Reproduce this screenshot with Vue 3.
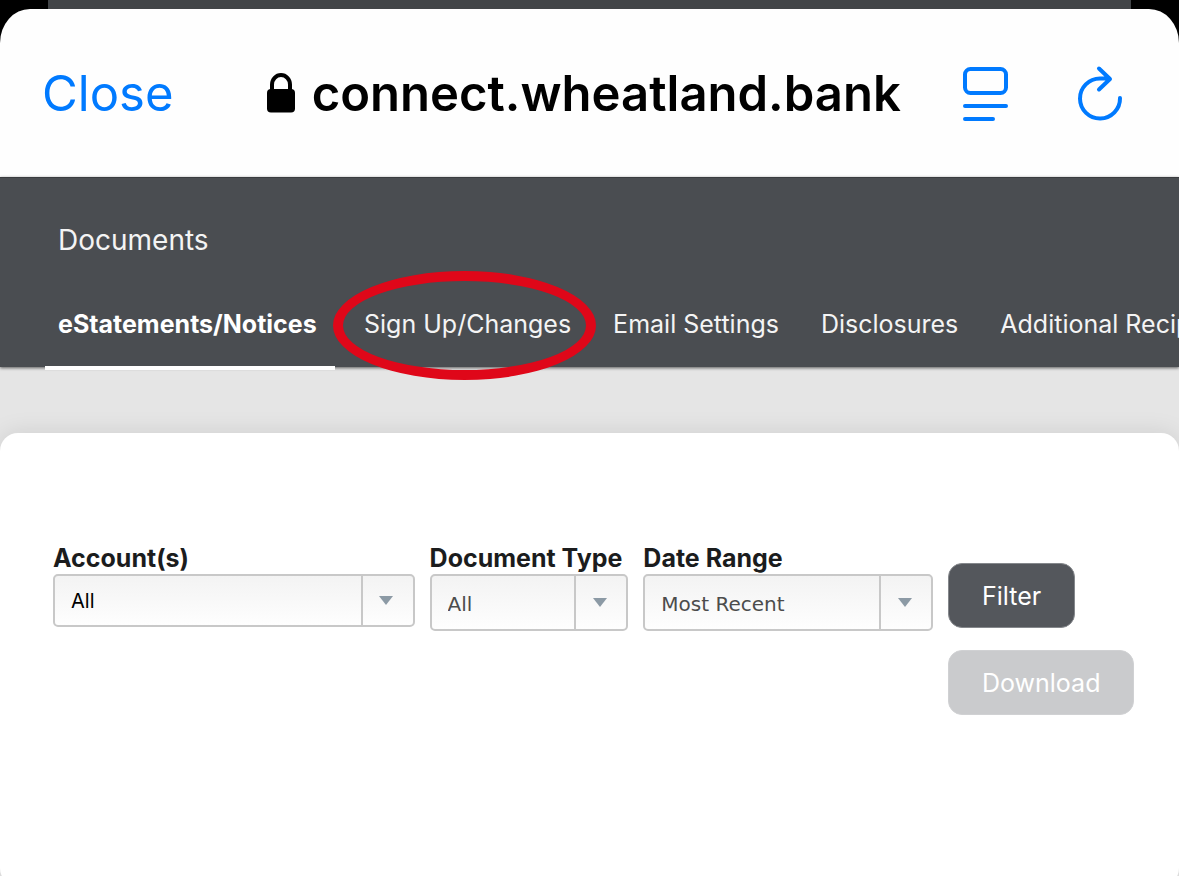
<script setup>
import { ref } from 'vue'

const tabs = [
  { label: 'eStatements/Notices', active: true },
  { label: 'Sign Up/Changes', marked: true },
  { label: 'Email Settings' },
  { label: 'Disclosures' },
  { label: 'Additional Recipients' },
]

const account = ref('All')
const docType = ref('All')
const range = ref('Most Recent')
</script>

<template>
  <div class="screen">
    <div class="backdrop"></div>
    <div class="sheet">
      <header class="browser-bar">
        <button type="button" class="close">Close</button>
        <div class="address">
          <svg class="lock" viewBox="0 0 30 40" aria-hidden="true">
            <path d="M6 19V11.500a9 9.500 0 0 1 18 0V19" fill="none" stroke="#000" stroke-width="4" />
            <rect x="1" y="16" width="28" height="23.500" rx="4" />
          </svg>
          <span>connect.wheatland.bank</span>
        </div>
        <div class="actions">
          <button type="button" aria-label="Reader view">
            <svg width="46" height="56" viewBox="0 0 46 56">
              <rect x="2" y="4" width="41" height="24" rx="5.500" />
              <path d="M2 41H43M2 54H30" />
            </svg>
          </button>
          <button type="button" aria-label="Reload">
            <svg width="46" height="56" viewBox="0 0 46 56">
              <path d="M43 33A20 20 0 1 1 23 13.500H32.500M22 3.500L33 14L22 24.500" />
            </svg>
          </button>
        </div>
      </header>

      <div class="masthead">
        <h1>Documents</h1>
        <nav>
          <a v-for="t in tabs" :key="t.label" href="#" :class="{ active: t.active }">
            {{ t.label }}
            <i v-if="t.marked" class="ring"></i>
          </a>
        </nav>
      </div>

      <main class="page">
        <form class="card" @submit.prevent>
          <div class="field account">
            <label for="account">Account(s)</label>
            <div class="select">
              <select id="account" v-model="account"><option>All</option></select>
              <span class="arrow"></span>
            </div>
          </div>
          <div class="field type">
            <label for="type">Document Type</label>
            <div class="select">
              <select id="type" v-model="docType"><option>All</option></select>
              <span class="arrow"></span>
            </div>
          </div>
          <div class="field range">
            <label for="range">Date Range</label>
            <div class="select">
              <select id="range" v-model="range"><option>Most Recent</option></select>
              <span class="arrow"></span>
            </div>
          </div>
          <div class="buttons">
            <button type="submit">Filter</button>
            <button type="button" disabled>Download</button>
          </div>
        </form>
      </main>
    </div>
  </div>
</template>

<style>
body {
  background: #000;
}
</style>

<style scoped>
.screen {
  min-height: 100vh;
  display: flex;
  flex-direction: column;
  overflow: hidden;
  background: #000;
  font-family: Inter, "Liberation Sans", sans-serif;
}
.screen * {
  box-sizing: border-box;
}
.backdrop {
  height: 9px;
  margin: 0 48px;
  background: #424548;
}
.sheet {
  flex: 1;
  display: flex;
  flex-direction: column;
  background: #fefefe;
  border-radius: 30px 30px 0 0 / 34px 34px 0 0;
}
button {
  font: inherit;
  border: 0;
  padding: 0;
  background: none;
}
.browser-bar {
  height: 168px;
  display: flex;
  align-items: center;
  padding: 0 56px 0 42px;
}
.close {
  color: #007aff;
  font-size: 49px;
}
.address {
  flex: 1;
  display: flex;
  align-items: center;
  justify-content: center;
  gap: 16px;
  padding-left: 30px;
  font-size: 49px;
  font-weight: 600;
  color: #000;
  white-space: nowrap;
}
.lock {
  width: 30px;
  height: 40px;
  flex: none;
}
.actions {
  display: flex;
  gap: 68px;
}
.actions svg {
  display: block;
  fill: none;
  stroke: #007aff;
  stroke-width: 4;
  stroke-linecap: round;
  stroke-linejoin: round;
}
.masthead {
  position: relative;
  z-index: 1;
  background: #4a4d51;
  border-top: 1px solid #3a3c3f;
  padding: 44px 0 0 45px;
  color: #fff;
  box-shadow: 0 1px 3px rgba(0, 0, 0, 0.6);
}
h1 {
  margin: 0 0 22px;
  padding-left: 13px;
  font-size: 28px;
  line-height: 36px;
  font-weight: 400;
  color: #f4f4f4;
}
nav {
  display: flex;
  gap: 16px;
  height: 87px;
  white-space: nowrap;
}
nav a {
  position: relative;
  padding: 0 13px;
  font-size: 25px;
  line-height: 88px;
  color: #f4f4f4;
  text-decoration: none;
}
nav a.active {
  min-width: 290px;
  height: 90px;
  font-weight: 700;
  color: #fff;
  border-bottom: 4px solid #fff;
}
.ring {
  position: absolute;
  inset: -9px -12px -13px -18px;
  border: 10px solid #df0719;
  border-radius: 50%;
}
.page {
  flex: 1;
  display: flex;
  flex-direction: column;
  padding-top: 66px;
  background: #e5e5e5;
}
.card {
  flex: 1;
  display: flex;
  align-items: flex-start;
  gap: 15px;
  margin-bottom: -10px;
  padding: 112px 46px 40px 53px;
  background: #fff;
  border-radius: 18px;
  box-shadow: 0 0 24px rgba(0, 0, 0, 0.1);
}
.field {
  color: #1b1c1d;
}
.account {
  flex: 362;
}
.type {
  flex: 199;
}
.range {
  flex: 290;
}
label {
  display: block;
  margin-bottom: 2px;
  font-size: 25px;
  line-height: 27px;
  font-weight: 700;
  white-space: nowrap;
}
.select {
  position: relative;
}
select {
  display: block;
  width: 100%;
  height: 57px;
  padding: 2px 60px 0 16px;
  appearance: none;
  border: 2px solid #c8c8c8;
  border-radius: 5px;
  background: linear-gradient(#f3f3f3, #fefefe);
  font: 20px "DejaVu Sans", sans-serif;
  color: #4c4c4c;
}
.account select {
  height: 53px;
  padding-top: 0;
  font-family: Inter, sans-serif;
  color: #000;
}
.arrow {
  position: absolute;
  inset: 2px 2px 2px auto;
  width: 52px;
  padding-right: 3px;
  display: grid;
  place-items: center;
  border-left: 2px solid #c8c8c8;
  pointer-events: none;
}
.arrow::before {
  content: "";
  border: 7px solid transparent;
  border-top: 9px solid #8c9aa5;
  border-bottom: 0;
}
.buttons {
  width: 185px;
  flex: none;
  display: flex;
  flex-direction: column;
  align-items: flex-start;
  gap: 22px;
  padding-top: 18px;
}
.buttons button {
  height: 65px;
  padding: 0 33px;
  border: 1px solid #85888c;
  border-radius: 14px;
  background: #54575c;
  color: #fff;
  font-size: 25px;
}
.buttons button:disabled {
  background: #cacbcd;
  border-color: #d0d1d3;
}
</style>
